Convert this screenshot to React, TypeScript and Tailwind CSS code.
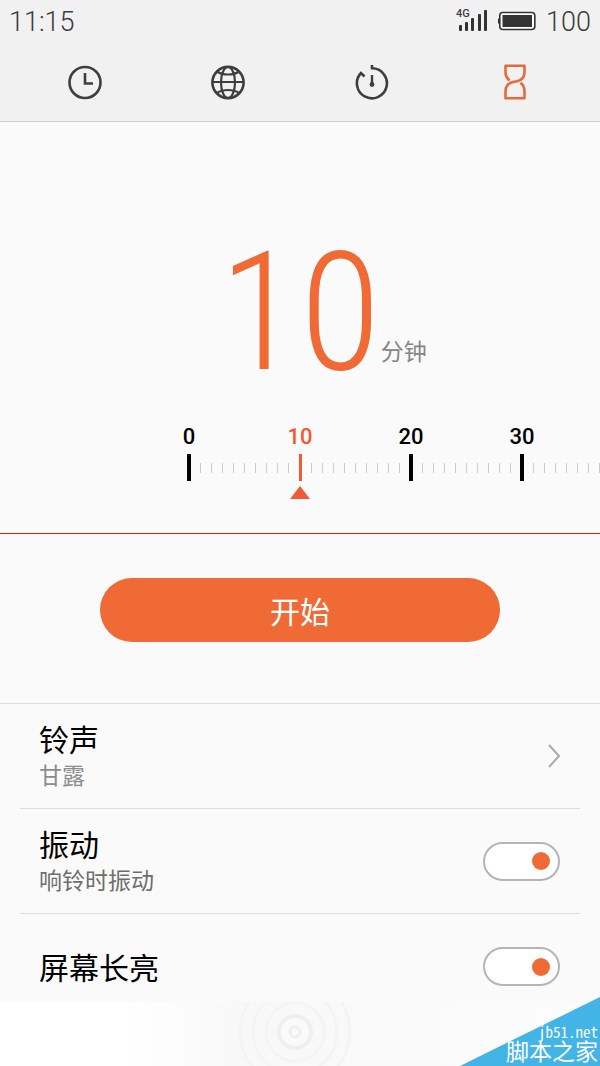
import { useState } from "react";
import type { ReactNode } from "react";

const TABS = ["clock", "world", "stopwatch", "timer"] as const;
const MARKS = [0, 10, 20, 30, 40, 50, 60];
const MINUTE_PX = 111 / 10;

function ClockIcon() {
  return (
    <svg width="36" height="36" viewBox="0 0 36 36" fill="none" stroke="currentColor">
      <circle cx="18" cy="18.5" r="15.5" strokeWidth="2.6" />
      <path d="M18 9v10.5h8" strokeWidth="2.6" />
    </svg>
  );
}

function GlobeIcon() {
  return (
    <svg width="36" height="36" viewBox="0 0 36 36" fill="none" stroke="currentColor" strokeWidth="2.2">
      <circle cx="18" cy="18.5" r="15.6" strokeWidth="2.6" />
      <ellipse cx="18" cy="18.5" rx="7" ry="15.5" />
      <path d="M2.5 18h31M7 7.5c3 2 6.5 3 11 3s8-1 11-3M7 29c3-2 6.5-3 11-3s8 1 11 3" />
    </svg>
  );
}

function StopwatchIcon() {
  return (
    <svg width="36" height="36" viewBox="0 0 36 36" fill="none" stroke="currentColor">
      <path d="M18 1v3.3A15 15 0 1 1 7 9l3.500 3.500" strokeWidth="2.6" />
      <path d="M18 11v9" strokeWidth="2.4" />
      <circle cx="18" cy="20.5" r="2.4" fill="currentColor" stroke="none" />
    </svg>
  );
}

function HourglassIcon() {
  return (
    <svg
      width="36"
      height="36"
      viewBox="0 0 36 36"
      fill="none"
      stroke="currentColor"
      strokeWidth="2.6"
      strokeLinejoin="round"
    >
      <path d="M12.5 16.5C9.5 14 8.5 12 8.5 8.5V1.8h19v6.7c0 5-3 7.700-7.500 8.700l-4 .9c-4.500 1-7.500 4-7.500 9v7.200h19v-7.200c0-3.500-1-5.700-4-8.300" />
    </svg>
  );
}

const TAB_ITEMS: Record<(typeof TABS)[number], { label: string; icon: ReactNode }> = {
  clock: { label: "闹钟", icon: <ClockIcon /> },
  world: { label: "世界时钟", icon: <GlobeIcon /> },
  stopwatch: { label: "秒表", icon: <StopwatchIcon /> },
  timer: { label: "计时器", icon: <HourglassIcon /> },
};

function StatusBar() {
  return (
    <div className="flex h-[42px] items-center justify-between px-[9px] text-[27px] leading-[42px] font-light text-[#3c3c3c]">
      <span className="pt-0.5">11:15</span>
      <div className="flex items-center gap-2.5">
        <div className="relative h-6 w-8">
          <span className="absolute top-0 left-0 text-[11px] leading-[10px] font-medium">4G</span>
          <svg className="h-6 w-8" viewBox="0 0 32 24" fill="#333">
            <rect x="3" y="16" width="3" height="6" rx="1" />
            <rect x="9" y="13" width="3" height="9" rx="1" />
            <rect x="15" y="9" width="3" height="13" rx="1" />
            <rect x="22" y="5" width="3" height="17" rx="1" />
            <rect x="28" y="1" width="3" height="21" rx="1" />
          </svg>
        </div>
        <svg width="38" height="20" viewBox="0 0 38 20">
          <rect x="1.8" y="1.5" width="35" height="17" rx="3" fill="#fff" stroke="#333" strokeWidth="1.6" />
          <rect x="0" y="7.5" width="2" height="5" fill="#333" />
          <rect x="4.5" y="4" width="29.5" height="12" fill="#333" />
        </svg>
        <span className="pt-0.5">100</span>
      </div>
    </div>
  );
}

function Ruler({ value, onChange }: { value: number; onChange: (value: number) => void }) {
  return (
    <div className="relative mt-2 overflow-hidden">
      <div
        className="flex pl-[calc(50%-113px)]"
        style={{ transform: `translateX(${(10 - value) * MINUTE_PX}px)` }}
      >
        {MARKS.map((mark) => {
          const active = mark === value;
          return (
            <div key={mark} className="w-[111px] shrink-0">
              <div
                className={`flex h-8 w-1 justify-center text-[22px] leading-8 font-medium ${
                  active ? "text-[#f05a37]" : "text-black"
                }`}
              >
                {/* only the marks near the pointer carry a number */}
                {Math.abs(mark - value) <= 20 && mark}
              </div>
              <div className="mt-px grid h-[27px] grid-cols-10 items-center">
                {Array.from({ length: mark === 60 ? 1 : 10 }, (_, i) => (
                  <div key={i} className="flex w-1 justify-center">
                    {i > 0 && <div className="h-[10px] w-px bg-[#ccc]" />}
                    {i === 0 && <div className={active ? "h-[27px] w-[3px] bg-[#f05a37]" : "h-[27px] w-1 bg-black"} />}
                  </div>
                ))}
              </div>
            </div>
          );
        })}
      </div>
      <svg className="mx-auto mt-[5px] block" width="20" height="13" viewBox="0 0 20 13" fill="#f05a37">
        <path d="M10 0l10 13H0z" />
      </svg>
      <input
        type="range"
        min={0}
        max={60}
        value={value}
        aria-label="分钟"
        onChange={(e) => onChange(Number(e.target.value))}
        className="absolute inset-0 h-full w-full cursor-pointer opacity-0"
      />
    </div>
  );
}

function SettingText({ title, detail, dark }: { title: string; detail?: string; dark?: boolean }) {
  return (
    <span className="flex flex-col pt-1 text-left">
      <span className="text-[30px] leading-[38px] text-black">{title}</span>
      {detail && (
        <span className={`text-[23px] leading-[34px] ${dark ? "text-[#6e6e6e]" : "text-[#8c8c8c]"}`}>{detail}</span>
      )}
    </span>
  );
}

function SwitchRow({ title, detail }: { title: string; detail?: string }) {
  const [checked, setChecked] = useState(true);

  return (
    <label className="flex h-[105px] cursor-pointer items-center justify-between pr-5 pl-[19px]">
      <SettingText title={title} detail={detail} dark />
      <input
        type="checkbox"
        role="switch"
        checked={checked}
        onChange={(e) => setChecked(e.target.checked)}
        className="flex h-[39px] w-[77px] shrink-0 cursor-pointer appearance-none items-center rounded-full border-2 border-[#b5b5b5] bg-white px-2 before:size-[18px] before:rounded-full before:bg-[#bbb] checked:justify-end checked:before:bg-[#f06a35]"
      />
    </label>
  );
}

function Watermark() {
  return (
    <div className="absolute right-0 bottom-0 h-[69px] w-[140px] text-white">
      <svg className="absolute inset-0" width="140" height="69" viewBox="0 0 140 69" fill="#42b4e6">
        <path d="M140 0v69H0z" />
      </svg>
      <div className="relative flex h-full flex-col items-end justify-end pr-0.5">
        <span className="font-['Noto_Sans_Mono_CJK_SC','Roboto_Condensed',monospace] text-[15px] leading-4">
          jb51.net
        </span>
        <span className="text-[23px] leading-[26px]">脚本之家</span>
      </div>
    </div>
  );
}

export default function App() {
  const [tab, setTab] = useState<(typeof TABS)[number]>("timer");
  const [minutes, setMinutes] = useState(10);

  return (
    <div className="relative min-h-screen overflow-hidden bg-[#fafafa] font-[Roboto,'Noto_Sans_CJK_SC',sans-serif]">
      <header className="border-b border-[#ccc] bg-[#f1f1f1]">
        <StatusBar />
        <nav className="grid h-[79px] grid-cols-4 px-[13px]">
          {TABS.map((id) => (
            <button
              key={id}
              aria-label={TAB_ITEMS[id].label}
              onClick={() => setTab(id)}
              className={`flex cursor-pointer items-center justify-center ${
                tab === id ? "text-[#e9683a]" : "text-[#3e3e3e]"
              }`}
            >
              {TAB_ITEMS[id].icon}
            </button>
          ))}
        </nav>
      </header>

      <main>
        <section className="pt-[91px] pb-[34px]">
          <div className="grid grid-cols-[1fr_auto_1fr]">
            <div />
            <div className="font-['Roboto_Condensed',Roboto,sans-serif] text-[166px] leading-[200px] font-light text-[#f06a35]">
              {minutes}
            </div>
            <span className="self-end pb-[43px] text-[23px] leading-[34px] text-[#858585]">分钟</span>
          </div>
          <Ruler value={minutes} onChange={setMinutes} />
        </section>

        <div className="h-px bg-[#d81e06]" />

        <section className="border-b border-[#ddd] px-[100px] pt-11 pb-[61px]">
          <button className="h-16 w-full cursor-pointer rounded-full bg-[#f06a35] pt-1 text-[30px] text-white">
            开始
          </button>
        </section>

        <section className="divide-y divide-[#ddd] px-5">
          <button className="flex h-[105px] w-full cursor-pointer items-center justify-between pr-5 pl-[19px]">
            <SettingText title="铃声" detail="甘露" />
            <svg width="12" height="24" viewBox="0 0 12 24" fill="none" stroke="#aaa" strokeWidth="2">
              <path d="M1 1l10 11L1 23" />
            </svg>
          </button>
          <SwitchRow title="振动" detail="响铃时振动" />
          <SwitchRow title="屏幕长亮" />
        </section>
      </main>

      <footer className="relative -mt-[17px] flex h-16 justify-center bg-linear-to-r from-white from-20% via-[#f8f8f8] via-40% to-[#fcfcfc]">
        <svg className="h-16 w-[280px]" viewBox="0 0 280 64" fill="none" stroke="#f4f4f4" strokeWidth="3">
          <circle cx="135" cy="30" r="16" fill="#fafafa" stroke="#efefef" strokeWidth="4" />
          <circle cx="135" cy="30" r="5" stroke="#efefef" />
          <circle cx="135" cy="30" r="29" />
          <circle cx="135" cy="30" r="42" />
          <circle cx="135" cy="30" r="55" />
        </svg>
      </footer>
      <Watermark />
    </div>
  );
}
